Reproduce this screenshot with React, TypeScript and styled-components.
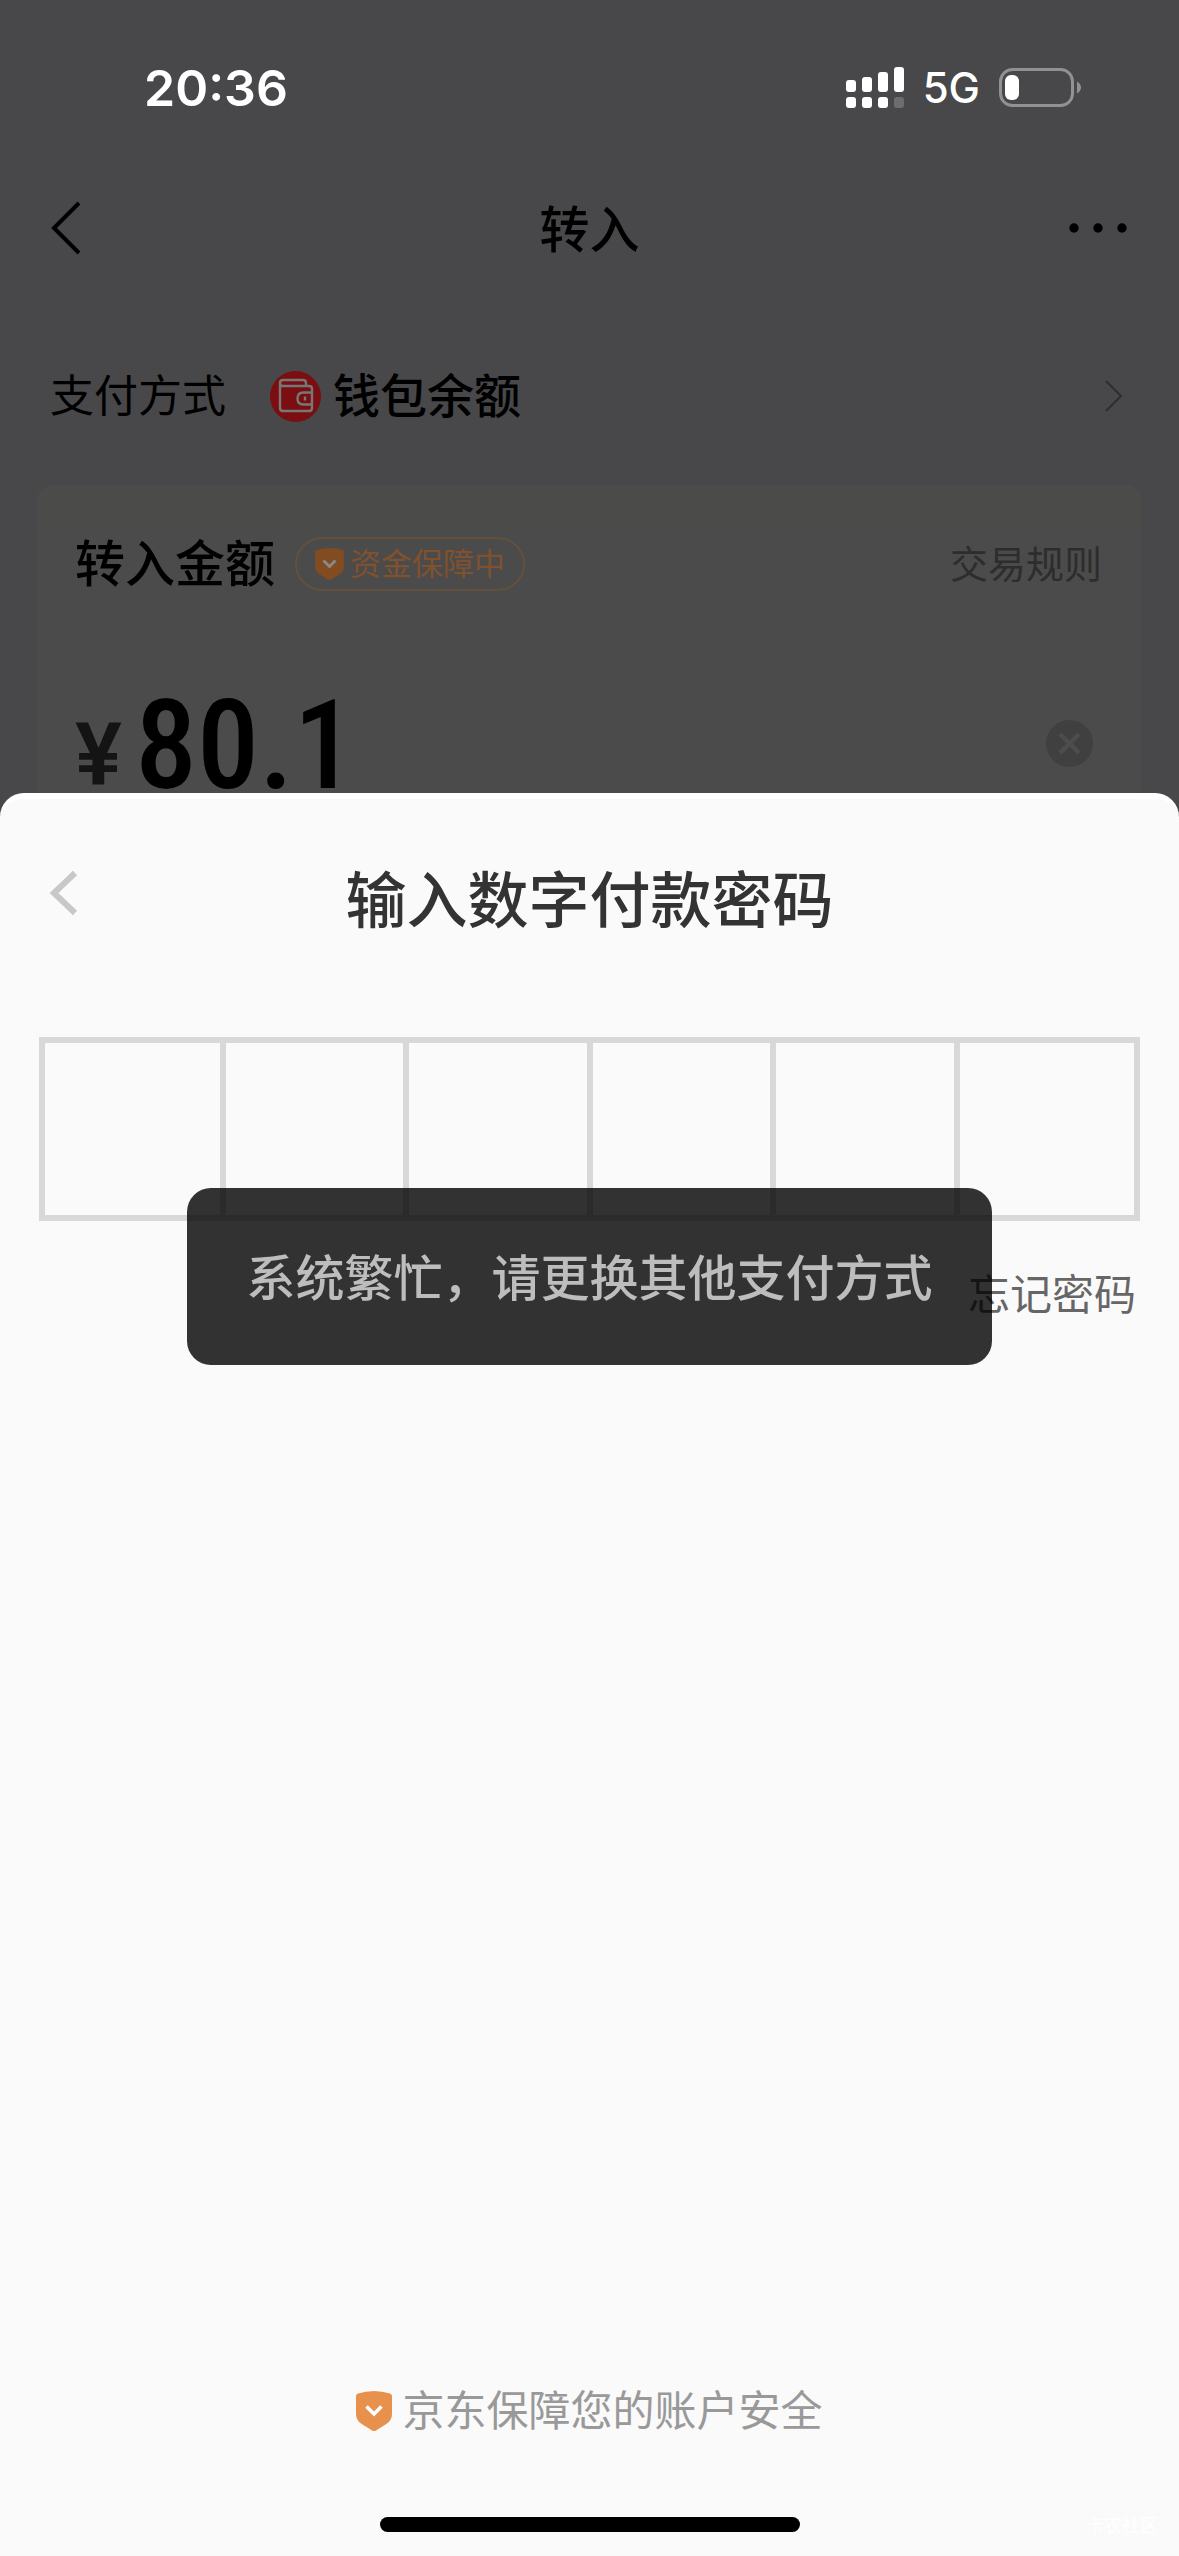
import { useState } from "react";
import styled, { createGlobalStyle } from "styled-components";

const GlobalStyle = createGlobalStyle`
  *, *::before, *::after { box-sizing: border-box; }
  html, body, #root { margin: 0; }
  body {
    background: #474649;
    font-family: Inter, "Noto Sans CJK SC", sans-serif;
    color: #000;
  }
  button, input { font: inherit; color: inherit; border: 0; padding: 0; background: none; }
  button { cursor: pointer; }
  svg { display: block; }
`;

const Page = styled.div`
  position: relative;
  min-height: 100vh;
  display: flex;
  flex-direction: column;
  background: #48484a;
`;

const StatusBar = styled.header`
  display: flex;
  justify-content: space-between;
  align-items: center;
  height: 176px;
  padding: 0 98px 0 144px;
  color: #fff;
`;

const Clock = styled.time`
  font-size: 50px;
  font-weight: 600;
  line-height: 60px;
`;

const StatusIcons = styled.div`
  display: flex;
  align-items: center;
  gap: 19px;
`;

const Network = styled.span`
  font-size: 42px;
  font-weight: 500;
  line-height: 50px;
`;

const NavBar = styled.nav`
  display: grid;
  grid-template-columns: 1fr auto 1fr;
  align-items: center;
  height: 104px;
  padding: 0 50px;
`;

const NavTitle = styled.h1`
  margin: 0;
  padding-top: 4px;
  font-size: 50px;
  font-weight: 500;
  line-height: 60px;
`;

const IconButton = styled.button<{ $end?: boolean }>`
  display: flex;
  justify-self: ${({ $end }) => ($end ? "end" : "start")};
`;

const MethodRow = styled.button`
  display: flex;
  align-items: center;
  width: 100%;
  height: 176px;
  margin: 28px 0 1px;
  padding: 0 56px 0 50px;
  text-align: left;
`;

const MethodLabel = styled.span`
  margin-right: 44px;
  font-size: 44px;
  line-height: 60px;
`;

const MethodName = styled.span`
  flex: 1;
  margin-left: 12px;
  font-size: 47px;
  font-weight: 500;
  line-height: 60px;
`;

const AmountCard = styled.section`
  height: 308px;
  margin: 0 37px;
  padding: 52px 40px 0 38px;
  border-radius: 16px 16px 0 0;
  background: linear-gradient(#4b4b49, #4b4b4b 60px);
`;

const CardHeader = styled.div`
  display: flex;
  align-items: center;
  height: 54px;
`;

const CardTitle = styled.h2`
  margin: 0 20px 0 0;
  font-size: 50px;
  font-weight: 500;
  line-height: 54px;
`;

const Badge = styled.span`
  display: flex;
  align-items: center;
  gap: 6px;
  height: 54px;
  padding: 0 18px;
  border: 2px solid #64503f;
  border-radius: 27px;
  color: #80512f;
  font-size: 31px;
  line-height: 40px;
`;

const RulesLink = styled.a`
  margin-left: auto;
  color: #2d2d2d;
  font-size: 38px;
  line-height: 54px;
  text-decoration: none;
`;

const AmountRow = styled.div`
  display: flex;
  align-items: center;
  height: 202px;
  padding: 103px 9px 0 0;
`;

const Currency = styled.label`
  width: 60px;
  padding-top: 20px;
  color: #141414;
  font-family: Roboto, sans-serif;
  font-size: 88px;
  font-weight: 600;
  line-height: 96px;
`;

const AmountInput = styled.input`
  flex: 1;
  min-width: 0;
  height: 100px;
  padding-top: 4px;
  font-family: "Roboto Condensed", Roboto, sans-serif;
  font-size: 124px;
  font-weight: 500;
  line-height: 96px;
  outline: 0;
`;

const Sheet = styled.main`
  flex: 1;
  display: flex;
  flex-direction: column;
  border-top: 6px solid #fff;
  border-radius: 24px 24px 0 0;
  background: #fafafa;
`;

const SheetHeader = styled.div`
  display: grid;
  grid-template-columns: 1fr auto 1fr;
  align-items: center;
  height: 188px;
  padding: 0 48px;
`;

const SheetTitle = styled.h2`
  margin: 0;
  padding-top: 16px;
  color: #333;
  font-size: 61px;
  font-weight: 500;
  line-height: 80px;
`;

const PinGroup = styled.div`
  display: grid;
  grid-template-columns: repeat(6, minmax(0, 1fr));
  height: 184px;
  margin: 50px 39px 0;
`;

const PinCell = styled.input`
  width: 100%;
  height: 100%;
  border: solid #d8d8d8;
  border-width: 6px 3px;
  border-radius: 0;
  outline: 0;
  color: #333;
  font-size: 60px;
  text-align: center;

  &:first-child {
    border-left-width: 6px;
  }

  &:last-child {
    border-right-width: 6px;
  }
`;

const ForgotLink = styled.a`
  align-self: flex-end;
  margin: 44px 43px 0 0;
  color: #666;
  font-size: 42px;
  line-height: 60px;
  text-decoration: none;
`;

const Guarantee = styled.footer`
  display: flex;
  justify-content: center;
  align-items: center;
  gap: 10px;
  margin-top: auto;
  color: #999;
  font-size: 42px;
  line-height: 60px;
`;

const HomeBar = styled.div`
  width: 420px;
  height: 15px;
  margin: 76px auto 24px;
  border-radius: 8px;
  background: #000;
`;

const Watermark = styled.small`
  position: absolute;
  right: 21px;
  bottom: 16px;
  color: #fff;
  font-size: 18px;
  line-height: 28px;
`;

const ToastLayer = styled.div`
  position: absolute;
  inset: 0;
  display: flex;
  justify-content: center;
  align-items: center;
  padding-bottom: 3px;
  pointer-events: none;
`;

const Toast = styled.div`
  padding: 61px 59px 56px;
  border-radius: 24px;
  background: rgba(0, 0, 0, 0.8);
  color: #bdbdbd;
  font-size: 49px;
  font-weight: 500;
  line-height: 60px;
`;

const Signal = () => (
  <svg width="58" height="42" viewBox="0 0 58 42" fill="#fff" aria-label="信号">
    <rect x="0" y="13" width="10" height="12" rx="3" />
    <rect x="16" y="10" width="10" height="15" rx="3" />
    <rect x="32" y="5" width="10" height="20" rx="3" />
    <rect x="48" y="0" width="10" height="25" rx="3" />
    <rect x="0" y="30" width="10" height="11" rx="3" />
    <rect x="16" y="30" width="10" height="11" rx="3" />
    <rect x="32" y="30" width="10" height="11" rx="3" />
    <rect x="48" y="30" width="10" height="11" rx="3" fill="#6d6d6f" />
  </svg>
);

const Battery = () => (
  <svg width="82" height="40" viewBox="0 0 82 40" aria-label="电量">
    <rect x="1.5" y="1.5" width="72" height="36" rx="12" fill="none" stroke="#919192" strokeWidth="3" />
    <rect x="6" y="7" width="14" height="25" rx="6" fill="#fff" />
    <path d="M78 13.5Q82 16 82 19.5T78 25.5Z" fill="#919192" />
  </svg>
);

type ChevronProps = { width: number; height: number; stroke: string; weight: number; right?: boolean };

const Chevron = ({ width, height, stroke, weight, right }: ChevronProps) => {
  const near = right ? weight / 2 : width - weight / 2;
  const far = right ? width - weight : weight;
  return (
    <svg width={width} height={height} viewBox={`0 0 ${width} ${height}`} fill="none" stroke={stroke} strokeWidth={weight}>
      <path d={`M${near} ${weight / 2}L${far} ${height / 2}L${near} ${height - weight / 2}`} />
    </svg>
  );
};

const Dots = () => (
  <svg width="60" height="12" viewBox="0 0 60 12">
    <circle cx="5" cy="6" r="4.7" />
    <circle cx="29" cy="6" r="4.7" />
    <circle cx="53" cy="6" r="4.7" />
  </svg>
);

const Wallet = () => (
  <svg width="51" height="51" viewBox="0 0 51 51" fill="none" stroke="#777" strokeWidth="2.4">
    <circle cx="25.5" cy="25.5" r="25.5" fill="#7a0e11" stroke="none" />
    <path d="M10 12v25q0 3 3 3h26q3 0 3-3V18q0-3-3-3H13q-3 0-3-3t3-3h20q3 0 3 3v3" />
    <path d="M42 21.5h-8.500q-6 0-6 6t6 6H42" />
    <path d="M35 25.500v4" />
  </svg>
);

const Shield = ({ width, fill, mark }: { width: number; fill: string; mark: string }) => (
  <svg width={width} height={Math.round(width * 1.12)} viewBox="0 0 36 40">
    <path d="M0 5Q0 3 2 2.500Q10 0 18 0T34 2.500Q36 3 36 5V23Q36 29 31 32.500L20 39.400Q18 40.400 16 39.400L5 32.500Q0 29 0 23Z" fill={fill} />
    <path d="M10.500 15.500L18 23L25.500 15.500" fill="none" stroke={mark} strokeWidth="3.600" />
  </svg>
);

const Clear = () => (
  <svg width="47" height="47" viewBox="0 0 47 47">
    <circle cx="23.5" cy="23.5" r="23.5" fill="#404040" />
    <path d="M14 14L33 33M33 14L14 33" stroke="#4d4d4d" strokeWidth="4.500" />
  </svg>
);

const PIN_LENGTH = 6;

export default function App() {
  const [amount, setAmount] = useState("80.1");

  return (
    <Page>
      <GlobalStyle />
      <StatusBar>
        <Clock>20:36</Clock>
        <StatusIcons>
          <Signal />
          <Network>5G</Network>
          <Battery />
        </StatusIcons>
      </StatusBar>

      <NavBar>
        <IconButton aria-label="返回">
          <Chevron width={31} height={54} stroke="#000" weight={4} />
        </IconButton>
        <NavTitle>转入</NavTitle>
        <IconButton $end aria-label="更多">
          <Dots />
        </IconButton>
      </NavBar>

      <MethodRow>
        <MethodLabel>支付方式</MethodLabel>
        <Wallet />
        <MethodName>钱包余额</MethodName>
        <Chevron width={18} height={32} stroke="#2e2e30" weight={2} right />
      </MethodRow>

      <AmountCard>
        <CardHeader>
          <CardTitle>转入金额</CardTitle>
          <Badge>
            <Shield width={29} fill="#824c20" mark="#888" />
            资金保障中
          </Badge>
          <RulesLink href="#rules">交易规则</RulesLink>
        </CardHeader>
        <AmountRow>
          <Currency htmlFor="amount">¥</Currency>
          <AmountInput
            id="amount"
            inputMode="decimal"
            value={amount}
            onChange={(e) => setAmount(e.target.value)}
          />
          <IconButton aria-label="清空金额" onClick={() => setAmount("")}>
            <Clear />
          </IconButton>
        </AmountRow>
      </AmountCard>

      <Sheet>
        <SheetHeader>
          <IconButton aria-label="返回上一步">
            <Chevron width={30} height={46} stroke="#c8c8c8" weight={6} />
          </IconButton>
          <SheetTitle>输入数字付款密码</SheetTitle>
        </SheetHeader>
        <PinGroup role="group" aria-label="数字付款密码">
          {Array.from({ length: PIN_LENGTH }, (_, i) => (
            <PinCell
              key={i}
              type="password"
              inputMode="numeric"
              maxLength={1}
              aria-label={`第${i + 1}位`}
            />
          ))}
        </PinGroup>
        <ForgotLink href="#forgot">忘记密码</ForgotLink>
        <Guarantee>
          <Shield width={36} fill="#e8914d" mark="#fff" />
          京东保障您的账户安全
        </Guarantee>
        <HomeBar />
        <Watermark>卡农社区</Watermark>
      </Sheet>

      <ToastLayer>
        <Toast role="alert">系统繁忙，请更换其他支付方式</Toast>
      </ToastLayer>
    </Page>
  );
}
